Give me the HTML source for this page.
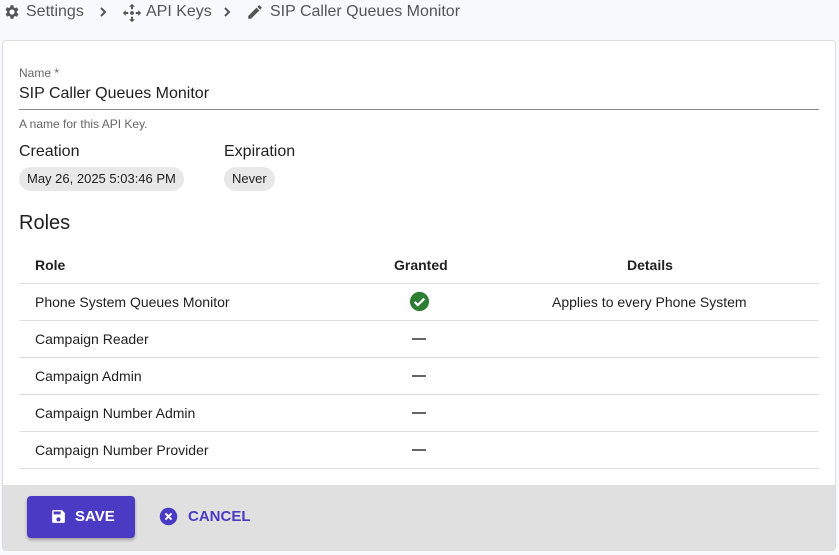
<!DOCTYPE html>
<html><head><style>
*{margin:0;padding:0;box-sizing:border-box}
body{width:839px;height:555px;background:#f8f9fc;font-family:"Liberation Sans",Roboto,sans-serif;color:#212121;position:relative;overflow:hidden}
.a{position:absolute;white-space:nowrap}
.bc{top:2px;font-size:16px;color:#555;line-height:20px}
.card{position:absolute;left:2px;top:40px;width:834px;height:511px;background:#fff;border:1px solid #dcdcdc;border-radius:4px;overflow:hidden}
.foot{position:absolute;left:0;top:444px;width:100%;height:67px;background:#e0e0e0}
.row{position:absolute;left:16px;width:800px;height:37px;border-bottom:1px solid #e0e0e0;font-size:14px;line-height:36px}
.chip{position:absolute;height:24px;border-radius:12px;background:#e8e8e8;font-size:13px;line-height:24px;padding:0 8px}
.dash{position:absolute;left:393px;top:17px;width:14px;height:2px;background:#666}
</style></head><body>
<svg class="a" style="left:3px;top:3px" width="18" height="18" viewBox="0 0 24 24"><path fill="#555" d="M19.4 13a7.5 7.5 0 000-2l2.1-1.6-2-3.5-2.5 1a7 7 0 00-1.7-1L15 3h-4l-.4 2.7a7 7 0 00-1.7 1l-2.5-1-2 3.5L6.5 11a7.5 7.5 0 000 2l-2.1 1.6 2 3.5 2.5-1a7 7 0 001.7 1L11 21h4l.4-2.7a7 7 0 001.7-1l2.5 1 2-3.5zM13 15.5A3.5 3.5 0 1113 8.5a3.5 3.5 0 010 7z" transform="translate(-1 0)"/></svg>
<div class="a bc" style="left:26px">Settings</div>
<svg class="a" style="left:99px;top:7px" width="8" height="10" viewBox="0 0 8 10"><path d="M2 1l4 4-4 4" stroke="#555" stroke-width="2" fill="none"/></svg>
<svg class="a" style="left:122px;top:3px" width="20" height="20" viewBox="0 0 24 24"><path fill="#555" d="M12 1l3.5 3.5h-2.3v3h-2.4v-3H8.5zM12 23l-3.5-3.5h2.3v-3h2.4v3h2.3zM1 12l3.5-3.5v2.3h3v2.4h-3v2.3zM23 12l-3.5 3.5v-2.3h-3v-2.4h3V8.5z"/><circle cx="12" cy="12" r="2.3" fill="#555"/></svg>
<div class="a bc" style="left:146px">API Keys</div>
<svg class="a" style="left:223px;top:7px" width="8" height="10" viewBox="0 0 8 10"><path d="M2 1l4 4-4 4" stroke="#555" stroke-width="2" fill="none"/></svg>
<svg class="a" style="left:246px;top:3px" width="18" height="18" viewBox="0 0 24 24"><path fill="#555" d="M3 17.25V21h3.75L17.8 9.94l-3.75-3.75zM20.7 7.04a1 1 0 000-1.41l-2.34-2.34a1 1 0 00-1.41 0l-1.83 1.83 3.75 3.75z"/></svg>
<div class="a bc" style="left:270px">SIP Caller Queues Monitor</div>
<div class="card">
<div class="a" style="left:16px;top:25px;font-size:12px;color:#666">Name *</div>
<div class="a" style="left:16px;top:44px;font-size:16px;color:#212121">SIP Caller Queues Monitor</div>
<div class="a" style="left:16px;top:68px;width:800px;height:1px;background:#8a8a8a"></div>
<div class="a" style="left:16px;top:76px;font-size:12px;color:#666">A name for this API Key.</div>
<div class="a" style="left:16px;top:102px;font-size:16px">Creation</div>
<div class="a" style="left:221px;top:102px;font-size:16px">Expiration</div>
<div class="chip" style="left:16px;top:126px">May 26, 2025 5:03:46 PM</div>
<div class="chip" style="left:221px;top:126px">Never</div>
<div class="a" style="left:16px;top:171px;font-size:20px">Roles</div>
<div class="row" style="top:206px;font-weight:bold">
<span class="a" style="left:16px">Role</span><span class="a" style="left:375px">Granted</span><span class="a" style="left:608px">Details</span></div>
<div class="row" style="top:243px"><span class="a" style="left:16px">Phone System Queues Monitor</span>
<svg class="a" style="left:389px;top:6px" width="23" height="23" viewBox="0 0 24 24"><circle cx="12" cy="12" r="10" fill="#2e7d32"/><path d="M7 12.5l3.2 3.2L17 9" stroke="#fff" stroke-width="2.4" fill="none"/></svg>
<span class="a" style="left:533px">Applies to every Phone System</span></div>
<div class="row" style="top:280px"><span class="a" style="left:16px">Campaign Reader</span><div class="dash"></div></div>
<div class="row" style="top:317px"><span class="a" style="left:16px">Campaign Admin</span><div class="dash"></div></div>
<div class="row" style="top:354px"><span class="a" style="left:16px">Campaign Number Admin</span><div class="dash"></div></div>
<div class="row" style="top:391px"><span class="a" style="left:16px">Campaign Number Provider</span><div class="dash"></div></div>
<div class="foot">
<div class="a" style="left:24px;top:11px;width:108px;height:42px;background:#4b3bc4;border-radius:4px;box-shadow:0 2px 3px rgba(0,0,0,.3)">
<svg class="a" style="left:23px;top:12px" width="17" height="17" viewBox="0 0 24 24"><path fill="#fff" d="M17 3H5a2 2 0 00-2 2v14a2 2 0 002 2h14a2 2 0 002-2V7zm-5 16a3 3 0 110-6 3 3 0 010 6zm3-10H5V5h10z"/></svg>
<span class="a" style="left:48px;top:12px;color:#fff;font-weight:bold;font-size:15px">SAVE</span></div>
<svg class="a" style="left:155px;top:21px" width="21" height="21" viewBox="0 0 24 24"><circle cx="12" cy="12" r="10" fill="#4b3bc4"/><path d="M8.5 8.5l7 7M15.5 8.5l-7 7" stroke="#fff" stroke-width="2.2"/></svg>
<span class="a" style="left:185px;top:23px;color:#4b3bc4;font-weight:bold;font-size:15px">CANCEL</span>
</div>
</div>
</body></html>
